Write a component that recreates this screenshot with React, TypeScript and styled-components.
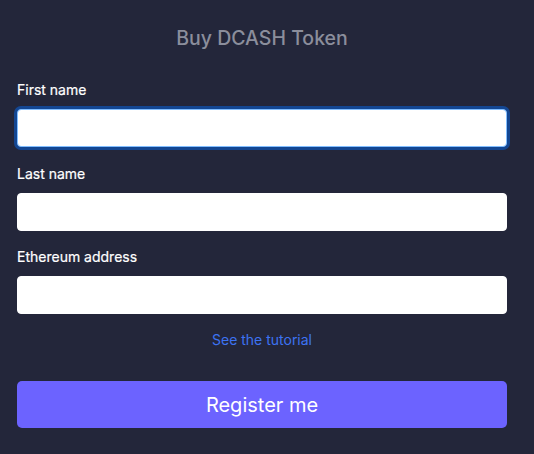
import React from "react";
import styled, { createGlobalStyle } from "styled-components";

const Global = createGlobalStyle`
  html, body { margin: 0; padding: 0; background: #23263a; }
  body { font-family: Inter, "Noto Sans", sans-serif; -webkit-font-smoothing: antialiased; }
  * { box-sizing: border-box; }
`;

const Page = styled.div`
  width: 534px;
  min-height: 454px;
  background: #23263a;
  padding: 26px 27px 0 17px;
  display: flex;
  flex-direction: column;
`;

const Title = styled.h1`
  margin: 0 0 29px;
  font-size: 19.5px;
  line-height: 24px;
  font-weight: 500;
  color: #8b8e9c;
  text-align: center;
`;

const Fields = styled.div`
  display: flex;
  flex-direction: column;
  gap: 15.5px;
`;

const Field = styled.div`
  display: flex;
  flex-direction: column;
`;

const Label = styled.label`
  font-size: 14px;
  line-height: 21px;
  font-weight: 400;
  color: #ffffff;
  margin-bottom: 9px;
  -webkit-text-stroke: 0.2px #ffffff;
`;

const Input = styled.input`
  width: 490px;
  height: 38px;
  border: 1px solid #ffffff;
  border-radius: 4px;
  background: #ffffff;
  padding: 0 12px;
  font-family: inherit;
  font-size: 16px;
  color: #333;
  outline: none;
  &:focus {
    border-color: #80bdff;
    box-shadow: 0 0 0 3px rgba(0, 110, 255, 0.45);
  }
`;

const Tutorial = styled.a`
  display: block;
  text-align: center;
  font-size: 14px;
  line-height: 20px;
  color: #3d73f2;
  text-decoration: none;
  margin-top: 16px;
  margin-bottom: 31px;
`;

const Button = styled.button`
  width: 490px;
  height: 47px;
  border: none;
  border-radius: 5px;
  background: #6c63ff;
  color: #ffffff;
  font-family: inherit;
  font-size: 20px;
  font-weight: 400;
  cursor: pointer;
`;

export default function App() {
  const ref = React.useRef<HTMLInputElement>(null);
  React.useEffect(() => {
    ref.current?.focus();
  }, []);
  return (
    <Page>
      <Global />
      <Title>Buy DCASH Token</Title>
      <Fields>
        <Field>
          <Label>First name</Label>
          <Input ref={ref} type="text" />
        </Field>
        <Field>
          <Label>Last name</Label>
          <Input type="text" />
        </Field>
        <Field>
          <Label>Ethereum address</Label>
          <Input type="text" />
        </Field>
      </Fields>
      <Tutorial href="#">See the tutorial</Tutorial>
      <Button>Register me</Button>
    </Page>
  );
}
